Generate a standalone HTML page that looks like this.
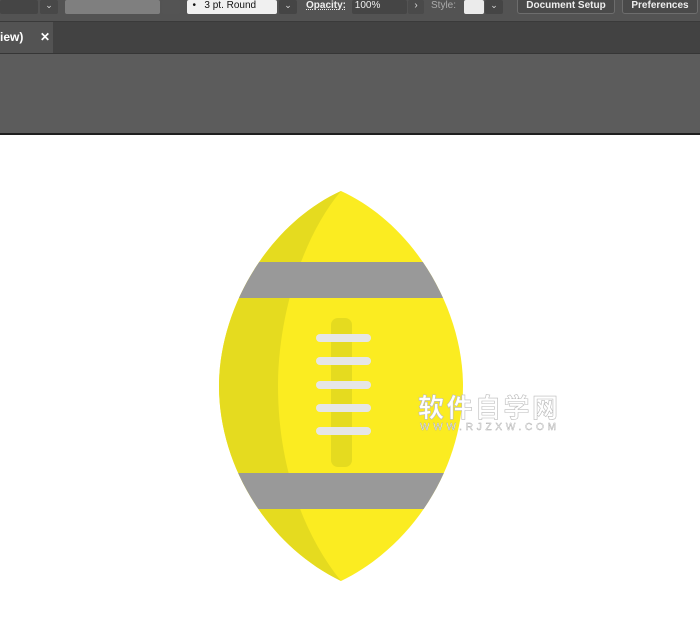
<!DOCTYPE html>
<html><head><meta charset="utf-8"><style>
body{margin:0;width:700px;height:634px;overflow:hidden;background:#fff;font-family:"Liberation Sans","Noto Sans CJK SC",sans-serif;position:relative}
.top{position:absolute;left:0;top:0;width:700px;height:21px;background:#535353}
.tabs{position:absolute;left:0;top:21px;width:700px;height:31px;background:#424242;border-top:1px solid #3a3a3a}
.tab{position:absolute;left:0;top:0;width:53px;height:31px;background:#535353;color:#fff;font-size:12px;font-weight:bold;line-height:31px}
.panel{position:absolute;left:0;top:53px;width:700px;height:80px;background:#5c5c5c;border-top:1px solid #363636}
.line{position:absolute;left:0;top:133px;width:700px;height:2px;background:#1e1e1e}
.box{position:absolute;top:0;height:14px;border-radius:2px}
.t{position:absolute;top:0;font-size:10px;color:#eee;line-height:12px}
.btn{position:absolute;top:-2px;height:14px;border:1px solid #6d6d6d;border-radius:3px;background:#4a4a4a;color:#eee;font-size:10px;font-weight:bold;text-align:center;line-height:14px}
</style></head><body>
<div class="top">
 <div class="box" style="left:0;width:38px;background:#454545"></div>
 <div class="box" style="left:40px;width:18px;background:#484848;color:#ddd;font-size:9px;text-align:center">⌄</div>
 <div class="box" style="left:65px;width:95px;background:#7f7f7f"></div>
 <div class="box" style="left:162px;width:18px;background:#545454"></div>
 <div class="box" style="left:187px;width:90px;background:#f0f0f0;color:#111;font-size:10px;line-height:11px">&nbsp;&nbsp;•&nbsp;&nbsp;&nbsp;3 pt. Round</div>
 <div class="box" style="left:279px;width:18px;background:#454545;color:#ddd;font-size:9px;text-align:center">⌄</div>
 <div class="t" style="left:306px;text-decoration:underline dotted;font-weight:bold">Opacity:</div>
 <div class="box" style="left:352px;width:55px;background:#454545;color:#eee;font-size:10px;line-height:11px">&nbsp;100%</div>
 <div class="box" style="left:408px;width:16px;background:#4a4a4a;color:#ddd;font-size:10px;text-align:center;line-height:11px">›</div>
 <div class="t" style="left:431px;color:#aaa">Style:</div>
 <div class="box" style="left:464px;width:20px;background:#ebebeb"></div>
 <div class="box" style="left:485px;width:18px;background:#454545;color:#ddd;font-size:9px;text-align:center">⌄</div>
 <div class="btn" style="left:517px;width:96px">Document Setup</div>
 <div class="btn" style="left:622px;width:74px">Preferences</div>
</div>
<div class="tabs"><div class="tab">iew)&nbsp;&nbsp;&nbsp;&nbsp;&nbsp;✕</div></div>
<div class="panel"></div>
<div class="line"></div>
<svg width="700" height="634" style="position:absolute;left:0;top:0">
<defs><clipPath id="c"><path id="b" d="M341,191 C415,225 463,310 463,386 C463,465 415,545 341,581 C267,545 219,465 219,386 C219,310 267,225 341,191 Z"/></clipPath></defs>
<g clip-path="url(#c)">
<rect x="200" y="180" width="300" height="420" fill="#fbec21"/>
<path d="M341,191 C300,240 278,320 278,386 C278,460 300,530 341,581 L200,600 L200,180 Z" fill="#e5db1f"/>
<rect x="200" y="262" width="300" height="36" fill="#999"/>
<rect x="200" y="473" width="300" height="36" fill="#999"/>
</g>
<rect x="331" y="318" width="21" height="149" rx="7" fill="#e5db1f"/>
<g fill="#e6e6e6">
<rect x="316" y="334" width="55" height="8" rx="4"/>
<rect x="316" y="357" width="55" height="8" rx="4"/>
<rect x="316" y="381" width="55" height="8" rx="4"/>
<rect x="316" y="404" width="55" height="8" rx="4"/>
<rect x="316" y="427" width="55" height="8" rx="4"/>
</g>
<text x="418" y="417" font-size="26" font-weight="bold" fill="#fff" stroke="#bbb" stroke-width="0.6" font-family="Noto Sans CJK SC,sans-serif" textLength="140">软件自学网</text>
<text x="420" y="430" font-size="10" fill="#fff" stroke="#aaa" stroke-width="0.4" font-family="Liberation Sans,sans-serif" textLength="136">WWW.RJZXW.COM</text>
</svg>
</body></html>
